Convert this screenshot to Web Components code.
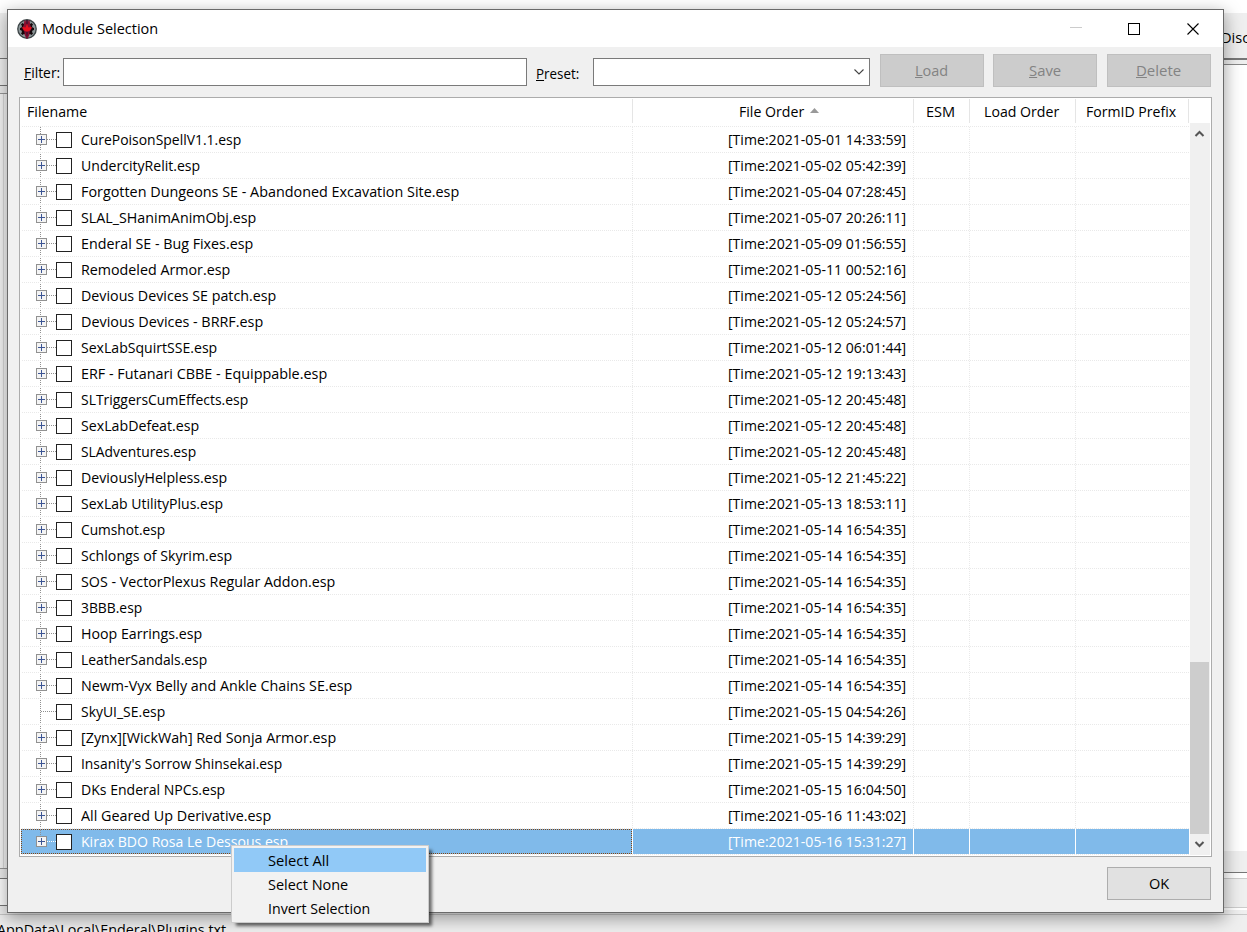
<!DOCTYPE html>
<html lang="en">
<head>
<meta charset="utf-8">
<title>Module Selection</title>
<style>
html,body{margin:0;padding:0;width:1247px;height:932px;overflow:hidden;background:#efefef}
body{font:15px "Open Sans","Noto Sans",sans-serif;color:#000}
</style>
</head>
<body>
<app-desktop></app-desktop>
<script>
const define = (name, html, setup) => customElements.define(name, class extends HTMLElement {
  connectedCallback() {
    if (this.shadowRoot) return;
    const t = document.createElement('template');
    t.innerHTML = typeof html === 'function' ? html(this) : html;
    this.attachShadow({mode: 'open'}).append(t.content.cloneNode(true));
    if (setup) setup(this);
  }
});

/* Label that condenses its text to occupy the width in its w attribute. */
define('ui-label', `<style>:host{display:inline-block;white-space:pre}span{display:inline-block;transform-origin:0 0}</style><span><slot></slot></span>`, el => {
  const w = +el.getAttribute('w');
  const s = el.shadowRoot.querySelector('span');
  const natural = s.getBoundingClientRect().width;
  if (w && natural) {
    el.style.width = w + 'px';
    s.style.transform = 'scaleX(' + ((w - 0.8) / natural).toFixed(4) + ')';
  }
});

define('push-button', `<style>
:host{display:flex;box-sizing:border-box;width:104px;height:33px;border:1px solid #adadad;background:#e1e1e1;align-items:center;justify-content:center;line-height:20px;padding-bottom:2px}
:host([disabled]){background:#ccc;border-color:#bfbfbf;color:#838383}
</style><slot></slot>`);

define('text-field', `<style>:host{display:block;box-sizing:border-box;height:28px;border:1px solid #7a7a7a;background:#fff}</style>`);

define('combo-box', `<style>:host{display:flex;box-sizing:border-box;height:28px;border:1px solid #7a7a7a;background:#fff;align-items:center;justify-content:flex-end;padding-right:4px}</style>
<svg width="12" height="8"><path d="M1.500 1.500L6 6l4.500-4.500" fill="none" stroke="#444" stroke-width="1.100"/></svg>`);

define('app-icon', `<style>:host{display:block;width:20px;height:20px}svg{display:block}</style>
<svg width="20" height="20" viewBox="0 0 20 20"><circle cx="10" cy="10" r="9.900" fill="#3c4446"/><circle cx="10" cy="10" r="8.600" fill="#8b9597"/>
<path d="M9 3h2l.5 1.500 1.500.5 1.500-1 1.500 1.500-1 1.500.5 1.500 1.500.5v2l-1.500.5-.5 1.500 1 1.500-1.500 1.500-1.500-1-1.500.5L11 17H9l-.5-1.500L7 15l-1.500 1L4 14.500 5 13l-.5-1.500L3 11V9l1.500-.5L5 7 4 5.500 5.500 4 7 5l1.500-.5z" fill="#14080b"/>
<path d="M7.500.8L9 2.500h2L12.500.8l.6 4.700 1.600 4-2 3-.4 3.500-1.600 3.500H9.300L7.700 16l-.4-3.500-2-3 1.600-4z" fill="#8a1030"/><path d="M5 8l3.500.5L10 5l1.500 3.500L15 8l-2 3.500-3 1-3-1z" fill="#e8101e"/><path d="M9 1h2l-.3 4H9.300zM8.700 13L10 19.500 11.300 13z" fill="#4e1030"/></svg>`);

define('title-bar', `<style>
:host{display:flex;height:37px;background:#fff;align-items:center;padding-left:9px}
app-icon{margin-right:5px}.grow{flex:1}svg{display:block;margin-right:23px}
ui-label{line-height:37px}
</style><app-icon></app-icon><ui-label w="117">Module Selection</ui-label><span class="grow"></span>
<svg width="130" height="14" shape-rendering="crispEdges"><path d="M0 5.500h12" stroke="#ccc"/><rect x="58.500" y="1.500" width="11" height="11" fill="none" stroke="#000"/><path d="M117.500 1.500l11 11m0-11l-11 11" stroke="#000" stroke-width="1.100" shape-rendering="auto"/></svg>`);

define('filter-bar', `<style>
:host{display:grid;height:50px;grid-template-columns:39px 464px 9px 57px 277px 10px 104px 9px 104px 10px 104px;padding-left:16px;align-items:start}
.a{padding-top:14px;line-height:22px}text-field,combo-box{margin-top:11px}push-button{margin-top:7px}
</style>
<ui-label class="a" w="37"><u>F</u>ilter:</ui-label><text-field></text-field><span></span>
<ui-label class="a" style="padding-top:15px" w="44"><u>P</u>reset:</ui-label><combo-box></combo-box><span></span>
<push-button disabled><ui-label w="34"><u>L</u>oad</ui-label></push-button><span></span>
<push-button disabled><ui-label w="33"><u>S</u>ave</ui-label></push-button><span></span>
<push-button disabled><ui-label w="46"><u>D</u>elete</ui-label></push-button>`);

define('list-header', `<style>
:host{display:grid;grid-template-columns:613px 281px 56px 106px 113px 1fr;height:28px;line-height:28px;box-sizing:border-box;padding-top:1px}
div{height:24px;line-height:24px;border-right:1px solid #e5e5e5;box-sizing:border-box;text-align:center}
div:first-of-type{text-align:left;padding-left:6.500px}div:last-child{border:0}
.sort{display:flex;padding-left:106px;align-items:flex-start}.sort svg{margin:9px 0 0 5px}
.c{padding-right:1px}
</style><div><ui-label w="61">Filename</ui-label></div><div class="sort"><ui-label w="66">File Order</ui-label><svg width="9" height="5"><path d="M0 5L4.500 0 9 5z" fill="#999"/></svg></div>
<div class="c"><ui-label w="30">ESM</ui-label></div><div class="c"><ui-label w="76">Load Order</ui-label></div><div class="c"><ui-label w="91">FormID Prefix</ui-label></div><div></div>`);

define('module-row', el => `<style>
:host{display:grid;grid-template-columns:612px 281px 56px 106px 113px;height:26px;line-height:25px;
 background:repeating-linear-gradient(90deg,#e9e9e9 0 1px,transparent 1px 2px) 1px 0/1167px 1px no-repeat;box-sizing:border-box;padding-top:1px}
.c{height:25px;box-sizing:border-box;background:repeating-linear-gradient(#e9e9e9 0 1px,#fff 1px 2px) 100% 0/1px 100% no-repeat}
.c:last-child{background:none}
.n{display:flex;align-items:center;padding:0 0 0 15px}
.n svg{display:block;margin-right:9px;flex:none}
.t{display:flex;justify-content:flex-end;padding-right:7px}
:host([selected]) .c{background:linear-gradient(#80baea,#80baea) 0 0/calc(100% - 1px) 100% no-repeat #fff;color:#fff}
:host([selected]) .c:last-child{background:#80baea}
:host([selected]) .n{background:
 repeating-linear-gradient(90deg,#804515 0 1px,#80baea 1px 2px) 0 0/611px 1px no-repeat,
 repeating-linear-gradient(90deg,#804515 0 1px,#80baea 1px 2px) 0 100%/611px 1px no-repeat,
 repeating-linear-gradient(#804515 0 1px,#80baea 1px 2px) 0 0/1px 100% no-repeat,
 repeating-linear-gradient(#804515 0 1px,#80baea 1px 2px) 610px 0/1px 100% no-repeat,
 linear-gradient(#80baea,#80baea) 0 0/611px 100% no-repeat,#fff}
</style>
<div class="c n"><svg width="36" height="25" shape-rendering="crispEdges">
<path d="M4.500 ${el.hasAttribute('first') ? 0 : 1}v${el.hasAttribute('selected') ? 12 : 24}" stroke="#909090" stroke-dasharray="1 1"/>
<path d="M5 12.500h15" stroke="${el.hasAttribute('selected') ? '#fff' : '#909090'}" stroke-dasharray="1 1"/>
${el.hasAttribute('leaf') ? '' : `<rect x=".5" y="7.500" width="10" height="10" fill="#f4f4f4" stroke="#919191"/><path d="M2 12.500h7M5.500 9v7" stroke="#3c5594"/>`}
<rect x="20.500" y="5.500" width="15" height="15" fill="#fff" stroke="#222"/></svg><slot></slot></div>
<div class="c t"><ui-label w="179">[Time:2021-05-${el.getAttribute('time')}]</ui-label></div><div class="c"></div><div class="c"></div><div class="c"></div>`);

define('scroll-bar', `<style>
:host{display:flex;flex-direction:column;width:20px;height:732px;margin-top:-3px;background:#f0f0f0}
svg{display:block}.s{height:519px}.th{height:172px;width:19px;background:#cdcdcd}
</style><svg width="19" height="20"><path d="M5.500 13L9.500 9l4 4" fill="none" stroke="#555" stroke-width="2"/></svg><div class="s"></div><div class="th"></div><svg width="19" height="21"><path d="M5.500 8l4 4 4-4" fill="none" stroke="#555" stroke-width="2"/></svg>`);

const modules = [
['CurePoisonSpellV1.1.esp',241,'01 14:33:59'],['UndercityRelit.esp',200,'02 05:42:39'],
['Forgotten Dungeons SE - Abandoned Excavation Site.esp',459,'04 07:28:45'],['SLAL_SHanimAnimObj.esp',256,'07 20:26:11'],
['Enderal SE - Bug Fixes.esp',253,'09 01:56:55'],['Remodeled Armor.esp',230,'11 00:52:16'],
['Devious Devices SE patch.esp',276,'12 05:24:56'],['Devious Devices - BRRF.esp',263,'12 05:24:57'],
['SexLabSquirtSSE.esp',217,'12 06:01:44'],['ERF - Futanari CBBE - Equippable.esp',327,'12 19:13:43'],
['SLTriggersCumEffects.esp',248,'12 20:45:48'],['SexLabDefeat.esp',199,'12 20:45:48'],
['SLAdventures.esp',196,'12 20:45:48'],['DeviouslyHelpless.esp',227,'12 21:45:22'],
['SexLab UtilityPlus.esp',223,'13 18:53:11'],['Cumshot.esp',165,'14 16:54:35'],
['Schlongs of Skyrim.esp',232,'14 16:54:35'],['SOS - VectorPlexus Regular Addon.esp',335,'14 16:54:35'],
['3BBB.esp',142,'14 16:54:35'],['Hoop Earrings.esp',202,'14 16:54:35'],['LeatherSandals.esp',207,'14 16:54:35'],
['Newm-Vyx Belly and Ankle Chains SE.esp',352,'14 16:54:35'],['SkyUI_SE.esp',165,'15 04:54:26','leaf'],
['[Zynx][WickWah] Red Sonja Armor.esp',336,'15 14:39:29'],["Insanity's Sorrow Shinsekai.esp",282,'15 14:39:29'],
['DKs Enderal NPCs.esp',225,'15 16:04:50'],['All Geared Up Derivative.esp',271,'16 11:43:02'],
['Kirax BDO Rosa Le Dessous.esp',288,'16 15:31:27','selected']];

define('module-list', `<style>
:host{display:block;box-sizing:border-box;width:1193px;height:760px;border:1px solid #acacac;background:#fff;margin-left:11px}
.body{display:flex;padding-left:1px;height:730px}.rows{width:1168px;margin-right:1px}
.end{height:1px;background:repeating-linear-gradient(90deg,#e9e9e9 0 1px,transparent 1px 2px) 1px 0}
</style><list-header></list-header><div class="body"><div class="rows">${modules.map((m, i) =>
`<module-row time="${m[2]}" ${m[3] || ''} ${i ? '' : 'first'}><ui-label w="${m[1] - 80}">${m[0]}</ui-label></module-row>`).join('')}<div class="end"></div></div><scroll-bar></scroll-bar></div>`);

define('app-dialog', `<style>
:host{display:block;box-sizing:border-box;width:1217px;height:904px;border:1px solid #6a6a6a;background:#f0f0f0;box-shadow:0 5px 16px 1px rgba(0,0,0,.36)}
footer{display:flex;justify-content:flex-end;padding:10px 12px 0 0}
</style><title-bar></title-bar><filter-bar></filter-bar><module-list></module-list><footer><push-button><ui-label w="21">OK</ui-label></push-button></footer>`);

define('context-menu', `<style>
:host{display:block;box-sizing:border-box;width:198px;height:78px;border:1px solid #ccc;background:#f2f2f2;padding:2px;box-shadow:4px 4px 3px -1px rgba(0,0,0,.55)}
div{height:24px;line-height:24px;padding-left:34px}.hot{background:#91c9f7}
</style><div class="hot"><ui-label w="62">Select All</ui-label></div><div><ui-label w="81">Select None</ui-label></div><div><ui-label w="103">Invert Selection</ui-label></div>`);

/* Parent application window, visible around the dialog's edges. */
define('back-window', `<style>
:host{display:flex;flex-direction:column;width:1247px;height:932px;background:#efefef;overflow:hidden}
.top{height:13px;background:#fff}.mid{height:901px;display:flex;justify-content:space-between}
.l{width:7px}.r{width:25px}.l div,.r div{box-sizing:border-box}
.bot{height:18px;border-top:1px solid #c8c8c8;box-sizing:border-box;overflow:hidden}
.bot ui-label{margin-left:-3px;line-height:20px;margin-top:4px}
.disc{height:45px;line-height:49px;white-space:nowrap}.disc ui-label{margin-left:-1px}
</style><div class="top"></div><div class="mid"><div class="l">
<div style="height:45px"></div><div style="height:28px;border:solid #777;border-width:1px 0;background:#f3f3f3"></div><div style="height:7px"></div>
<div style="height:776px;border:solid #999;border-width:1px 0;background:linear-gradient(90deg,transparent 3px,#ddd 3px 4px,transparent 4px) #f8f8f8"></div>
<div style="height:9px"></div><div style="height:28px;border:solid #777;border-width:1px 0;background:#fff"></div></div>
<div class="r"><div class="disc"><ui-label w="29">Disc</ui-label></div><div style="height:2px;background:#777"></div><div style="height:4px"></div>
<div style="height:787px;background:#fff;border-top:1px solid #888"></div><div style="height:21px"></div><div style="height:1px;background:#777"></div><div style="height:5px;background:#fff"></div>
<div style="height:30px;border:solid #ccc;border-width:1px 0"></div><div style="height:2px;background:#fff"></div></div></div>
<div class="bot"><ui-label w="230">AppData\\Local\\Enderal\\Plugins.txt</ui-label></div>`);

define('app-desktop', `<style>
:host{display:block;position:relative;width:1247px;height:932px;overflow:hidden}
app-dialog{position:absolute;left:7px;top:9px}context-menu{position:absolute;left:231px;top:845px}
</style><back-window></back-window><app-dialog></app-dialog><context-menu></context-menu>`);
</script>
</body>
</html>
